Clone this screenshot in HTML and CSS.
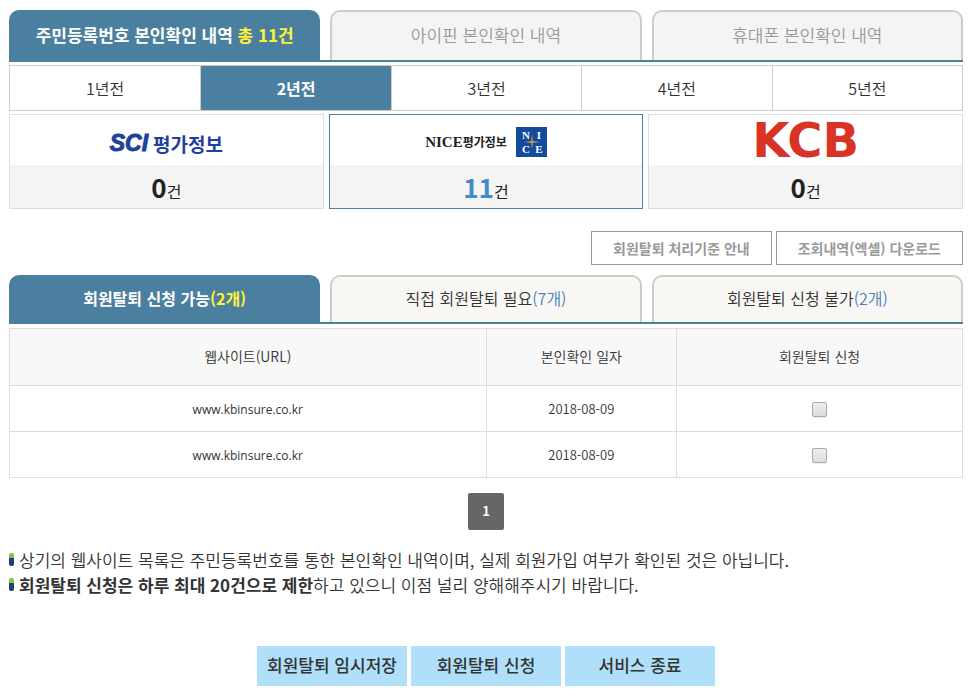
FILE: index.html
```
<!DOCTYPE html>
<html lang="ko">
<head>
    <meta charset="UTF-8">
    <meta name="viewport" content="width=device-width, initial-scale=1.0">
    <title>본인확인 내역 조회</title>
    <link rel="stylesheet" href="styles.css">
</head>
<body>

    <!-- Type of identification -->
    <nav class="tabs main-tabs">
        <a href="#" class="tab active">주민등록번호 본인확인 내역 <span class="count">총 11건</span></a>
        <a href="#" class="tab">아이핀 본인확인 내역</a>
        <a href="#" class="tab">휴대폰 본인확인 내역</a>
    </nav>

    <!-- Year -->
    <nav class="years">
        <a href="#" class="year">1년전</a>
        <a href="#" class="year active">2년전</a>
        <a href="#" class="year">3년전</a>
        <a href="#" class="year">4년전</a>
        <a href="#" class="year">5년전</a>
    </nav>

    <!-- Agencies -->
    <div class="agencies">
        <a href="#" class="agency">
            <span class="logo logo-sci"><span class="sci-mark">SCI</span>평가정보</span>
            <span class="result"><strong>0</strong>건</span>
        </a>
        <a href="#" class="agency active">
            <span class="logo logo-nice">
                <span class="nice-name"><span class="nice-latin">NICE</span>평가정보</span>
                <svg class="nice-mark" width="31" height="30" viewBox="0 0 31 30">
                    <rect width="31" height="30" fill="#124a9c"/>
                    <path d="M16 7l.9 7.100 7.100.9-7.100.9-.9 7.100-.9-7.100-7.100-.9 7.100-.9z" fill="#b39a55"/>
                    <text x="10" y="12">N</text>
                    <text x="23" y="12">I</text>
                    <text x="10" y="26">C</text>
                    <text x="23" y="26">E</text>
                </svg>
            </span>
            <span class="result"><strong>11</strong>건</span>
        </a>
        <a href="#" class="agency">
            <span class="logo logo-kcb">KCB</span>
            <span class="result"><strong>0</strong>건</span>
        </a>
    </div>

    <div class="tools">
        <button type="button" class="tool">회원탈퇴 처리기준 안내</button>
        <button type="button" class="tool">조회내역(엑셀) 다운로드</button>
    </div>

    <!-- Withdrawal status -->
    <nav class="tabs sub-tabs">
        <a href="#" class="tab active">회원탈퇴 신청 가능<span class="count">(2개)</span></a>
        <a href="#" class="tab">직접 회원탈퇴 필요<span class="count">(7개)</span></a>
        <a href="#" class="tab">회원탈퇴 신청 불가<span class="count">(2개)</span></a>
    </nav>

    <table class="sites">
        <thead>
            <tr>
                <th class="col-url">웹사이트(URL)</th>
                <th class="col-date">본인확인 일자</th>
                <th class="col-check">회원탈퇴 신청</th>
            </tr>
        </thead>
        <tbody>
            <tr>
                <td><label class="url" for="site1">www.kbinsure.co.kr</label></td>
                <td>2018-08-09</td>
                <td><input type="checkbox" id="site1" class="check"></td>
            </tr>
            <tr>
                <td><label class="url" for="site2">www.kbinsure.co.kr</label></td>
                <td>2018-08-09</td>
                <td><input type="checkbox" id="site2" class="check"></td>
            </tr>
        </tbody>
    </table>

    <div class="paging">
        <a href="#" class="page">1</a>
    </div>

    <ul class="notes">
        <li>상기의 웹사이트 목록은 주민등록번호를 통한 본인확인 내역이며, 실제 회원가입 여부가 확인된 것은 아닙니다.</li>
        <li><strong>회원탈퇴 신청은 하루 최대 20건으로 제한</strong>하고 있으니 이점 널리 양해해주시기 바랍니다.</li>
    </ul>

    <div class="actions">
        <button type="button" class="action">회원탈퇴 임시저장</button>
        <button type="button" class="action">회원탈퇴 신청</button>
        <button type="button" class="action">서비스 종료</button>
    </div>

</body>
</html>
```
FILE: styles.css
```
* {
    box-sizing: border-box;
}
body {
    margin: 0;
    padding: 10px 11px 10px 9px;
    font-family: "Noto Sans CJK KR", "Noto Sans", sans-serif;
    font-size: 16px;
    font-weight: 350;
    color: #333;
    background-color: #fff;
}
a {
    color: inherit;
    text-decoration: none;
}
button {
    font-family: inherit;
    cursor: pointer;
}
strong {
    font-weight: bold;
}

/* Tabs */
.tabs {
    display: grid;
    grid-template-columns: repeat(3, 1fr);
    gap: 10px;
    border-bottom: 2px solid #4b7f9f;
}
.tab {
    display: flex;
    align-items: center;
    justify-content: center;
    padding-bottom: 4px;
    white-space: pre;
    border: 2px solid #ccc;
    border-bottom: 0;
    border-radius: 10px 10px 0 0;
}
.tab.active {
    color: #fff;
    font-weight: bold;
    background-color: #4b7f9f;
    border-color: #4b7f9f;
}
.main-tabs .tab {
    height: 50px;
    font-size: 17px;
    color: #999;
    background-color: #f4f4f4;
}
.main-tabs .tab.active {
    color: #fff;
    background-color: #4b7f9f;
}
.sub-tabs .tab {
    height: 47px;
    background-color: #f8f7f3;
}
.sub-tabs .tab.active {
    background-color: #4b7f9f;
}
.sub-tabs .count {
    color: #4a7ebb;
}
.tabs .active .count {
    color: #fff23a;
}

/* Years */
.years {
    display: grid;
    grid-template-columns: repeat(5, 1fr);
    margin-top: 3px;
    border: 1px solid #ccc;
}
.year {
    height: 44px;
    line-height: 44px;
    text-align: center;
}
.year + .year {
    border-left: 1px solid #ccc;
}
.year.active {
    color: #fff;
    font-weight: bold;
    background-color: #4b7f9f;
}

/* Agencies */
.agencies {
    display: grid;
    grid-template-columns: repeat(3, 1fr);
    gap: 5px;
    margin-top: 3px;
}
.agency {
    border: 1px solid #ddd;
}
.agency.active {
    border-color: #4b7fa5;
}
.logo {
    display: flex;
    align-items: center;
    justify-content: center;
    height: 50px;
}
.logo-sci {
    gap: 5px;
    padding-top: 6px;
    font-size: 19px;
    font-weight: bold;
    color: #1f419b;
}
.sci-mark {
    font-family: "Liberation Sans", Arial, sans-serif;
    font-size: 23px;
    font-style: italic;
    -webkit-text-stroke: 1px #1f419b;
}
.logo-nice {
    gap: 9px;
    padding-top: 4px;
}
.nice-name {
    font-size: 12px;
    font-weight: bold;
    color: #222;
}
.nice-latin {
    font-family: "Liberation Serif", "Times New Roman", serif;
    font-size: 15px;
}
.nice-mark text {
    font-family: "Liberation Serif", "Times New Roman", serif;
    font-size: 11px;
    font-weight: bold;
    text-anchor: middle;
    fill: #fff;
}
.logo-kcb {
    font-family: "DejaVu Sans", sans-serif;
    font-size: 48px;
    font-weight: bold;
    color: #d83325;
}
.result {
    display: flex;
    align-items: baseline;
    justify-content: center;
    height: 43px;
    line-height: 43px;
    font-weight: normal;
    color: #222;
    background-color: #f4f4f4;
}
.result strong {
    font-size: 26px;
}
.agency.active strong {
    color: #428bca;
}

/* Tool buttons */
.tools {
    display: flex;
    justify-content: flex-end;
    gap: 4px;
    margin: 22px 0 10px;
}
.tool {
    height: 34px;
    padding: 0 21px;
    font-size: 14px;
    font-weight: bold;
    color: #999;
    background-color: #fff;
    border: 1px solid #999;
}

/* Site list */
.sites {
    width: 100%;
    margin-top: 4px;
    border-collapse: collapse;
    table-layout: fixed;
    font-size: 14px;
    text-align: center;
}
.sites th,
.sites td {
    height: 46px;
    padding: 0;
    border: 1px solid #ddd;
}
.sites th {
    height: 57px;
    padding-bottom: 2px;
    font-weight: 350;
    background-color: #f8f8f8;
}
.sites td {
    font-size: 13px;
}
.url {
    font-family: "Open Sans", "Noto Sans", sans-serif;
    font-size: 12px;
    font-weight: normal;
}
.col-url {
    width: 50%;
}
.col-date {
    width: 20%;
}
.col-check {
    width: 30%;
}
.check {
    appearance: none;
    display: block;
    width: 15px;
    height: 15px;
    margin: 2px auto 0;
    border: 1px solid #aaa;
    border-radius: 2px;
    background: linear-gradient(#eee, #dcdcdc);
    box-shadow: 0 1px 1px #eee;
}
.check:checked {
    background: #4b7f9f;
}

/* Paging */
.paging {
    display: flex;
    justify-content: center;
    margin-top: 15px;
}
.page {
    width: 36px;
    height: 37px;
    line-height: 36px;
    font-size: 13px;
    font-weight: bold;
    text-align: center;
    color: #fff;
    background-color: #666;
    border-radius: 2px;
}

/* Notes */
.notes {
    margin: 17px 0 0;
    padding: 0;
    list-style: none;
    font-size: 17px;
    line-height: 25px;
}
.notes li {
    display: flex;
    align-items: center;
}
.notes li::before {
    content: "";
    width: 5px;
    height: 13px;
    margin-right: 5px;
    border-radius: 2px;
    background: linear-gradient(#8cc04b 5px, #1d3f7c 5px);
}

/* Bottom buttons */
.actions {
    display: flex;
    justify-content: center;
    gap: 4px;
    margin-top: 49px;
}
.action {
    width: 150px;
    height: 40px;
    padding: 0 0 3px;
    font-size: 17px;
    font-weight: 500;
    color: #333;
    background-color: #b0dff9;
    border: 0;
}
```
